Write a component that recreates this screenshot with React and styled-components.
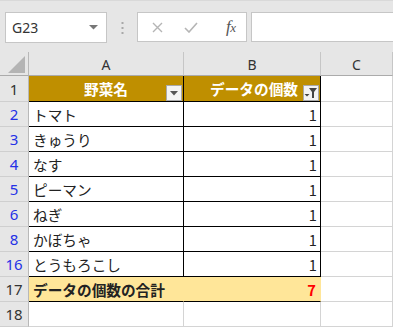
import React from "react";
import styled, { createGlobalStyle } from "styled-components";

const Global = createGlobalStyle`
  html, body { margin: 0; padding: 0; background: #e6e6e6; }
  body { font-family: "Noto Sans CJK JP", "Noto Sans", sans-serif; overflow: hidden; }
  * { box-sizing: border-box; }
`;

const Page = styled.div`
  width: 393px;
  height: 327px;
  display: flex;
  flex-direction: column;
  background: #e6e6e6;
  overflow: hidden;
`;

const FormulaBar = styled.div`
  height: 52px;
  display: flex;
  align-items: flex-start;
  padding: 11px 0 0 5px;
  border-top: 1px solid #d9d9d9;
`;

const NameBox = styled.div`
  width: 102px;
  height: 31px;
  background: #fff;
  border: 1px solid #c6c6c6;
  display: flex;
  align-items: center;
  justify-content: space-between;
  padding: 0 8px 0 6px;
  font-family: "Noto Sans", "Liberation Sans", sans-serif;
  font-size: 14px;
  color: #333;
`;

const Dots = styled.div`
  width: 30px;
  height: 31px;
  display: flex;
  align-items: center;
  justify-content: center;
`;

const ButtonsBox = styled.div`
  width: 110px;
  height: 30px;
  background: #fff;
  border: 1px solid #c6c6c6;
  display: flex;
  align-items: center;
  padding-left: 12px;
`;

const IconSlot = styled.div`
  width: ${(p) => p.$w}px;
  display: flex;
  align-items: center;
  justify-content: center;
`;

const Fx = styled.span`
  font-family: "Liberation Serif", "DejaVu Serif", serif;
  font-style: italic;
  color: #555;
  font-size: 17px;
  letter-spacing: -0.5px;
  small { font-size: 13px; }
`;

const FormulaInput = styled.div`
  flex: 1;
  height: 30px;
  margin-left: 4px;
  background: #fff;
  border: 1px solid #c6c6c6;
  border-right: none;
`;

const Sheet = styled.div`
  display: grid;
  grid-template-columns: 29px 155px 137px 1fr;
  grid-template-rows: 24px 26px repeat(9, 25px) 1fr;
  background: #fff;
  flex: 1;
`;

const Corner = styled.div`
  background: #e6e6e6;
  border-right: 1px solid #b8b8b8;
  border-bottom: 1px solid #ababab;
  display: flex;
  align-items: flex-end;
  justify-content: flex-end;
  padding: 0 3px 2px 0;
`;

const ColHead = styled.div`
  background: #e6e6e6;
  border-right: 1px solid #c6c6c6;
  border-bottom: 1px solid #ababab;
  display: flex;
  align-items: center;
  justify-content: center;
  font-family: "Noto Sans", "Liberation Sans", sans-serif;
  font-size: 14px;
  color: #333;
  padding-top: 1px;
`;

const RowNum = styled.div`
  background: #e6e6e6;
  border-right: 1px solid #b8b8b8;
  border-bottom: 1px solid #cfcfcf;
  display: flex;
  align-items: center;
  justify-content: center;
  font-family: "Noto Sans", "Liberation Sans", sans-serif;
  font-size: 15px;
  color: ${(p) => (p.$filtered ? "#2431e6" : "#333")};
`;

const borderColor = { black: "#000", grid: "#d4d4d4", total: "#ffe699", none: "transparent" };

const Cell = styled.div`
  position: relative;
  background: ${(p) => p.$bg || "#fff"};
  border-right: 1px solid ${(p) => borderColor[p.$right || "grid"]};
  border-bottom: 1px solid ${(p) => borderColor[p.$bottom || "grid"]};
  display: flex;
  align-items: center;
  justify-content: ${(p) => (p.$align === "right" ? "flex-end" : p.$align === "center" ? "center" : "flex-start")};
  padding: ${(p) => (p.$align === "right" ? `0 ${p.$pr ?? 3}px 0 4px` : "0 4px")};
  font-size: 14.67px;
  font-weight: ${(p) => (p.$bold ? 700 : 400)};
  color: ${(p) => p.$color || "#222"};
  white-space: nowrap;
`;

const FilterButton = styled.div`
  position: absolute;
  right: 1px;
  bottom: 0;
  width: 16px;
  height: 16px;
  background: #f3f3f3;
  border: 1px solid #a9a9a9;
  display: flex;
  align-items: center;
  justify-content: center;
`;

const Triangle = () => (
  <svg width="8" height="5" viewBox="0 0 8 5">
    <path d="M0 0 H8 L4 4.5 Z" fill="#555" />
  </svg>
);

const FilterIcon = () => (
  <svg width="14" height="12" viewBox="0 0 14 12">
    <path d="M0.5 7 H5.5 L3 9.5 Z" fill="#444" />
    <path d="M5 1 H13 L10 5 V11 H8 V5 Z" fill="#444" />
  </svg>
);

const rows = [
  { n: 2, name: "トマト" },
  { n: 3, name: "きゅうり" },
  { n: 4, name: "なす" },
  { n: 5, name: "ピーマン" },
  { n: 6, name: "ねぎ" },
  { n: 8, name: "かぼちゃ" },
  { n: 16, name: "とうもろこし" },
];

export default function App() {
  return (
    <Page>
      <Global />
      <FormulaBar>
        <NameBox>
          <span>G23</span>
          <svg width="9" height="5" viewBox="0 0 9 5">
            <path d="M0 0 H9 L4.5 4.5 Z" fill="#777" />
          </svg>
        </NameBox>
        <Dots>
          <svg width="3" height="12" viewBox="0 0 3 12">
            <rect x="0.5" y="0" width="2" height="2" fill="#a8a8a8" />
            <rect x="0.5" y="5" width="2" height="2" fill="#a8a8a8" />
            <rect x="0.5" y="10" width="2" height="2" fill="#a8a8a8" />
          </svg>
        </Dots>
        <ButtonsBox>
          <IconSlot $w={16}>
            <svg width="11" height="11" viewBox="0 0 11 11">
              <path d="M1 1 L10 10 M10 1 L1 10" stroke="#b5b5b5" strokeWidth="1.4" />
            </svg>
          </IconSlot>
          <IconSlot $w={50}>
            <svg width="14" height="11" viewBox="0 0 14 11">
              <path d="M1 6 L5 10 L13 1" stroke="#b5b5b5" strokeWidth="1.6" fill="none" />
            </svg>
          </IconSlot>
          <IconSlot $w={31}>
            <Fx>
              f<small>x</small>
            </Fx>
          </IconSlot>
        </ButtonsBox>
        <FormulaInput />
      </FormulaBar>
      <Sheet>
        <Corner>
          <svg width="17" height="17" viewBox="0 0 17 17">
            <path d="M17 0 V17 H0 Z" fill="#b4b4b4" />
          </svg>
        </Corner>
        <ColHead>A</ColHead>
        <ColHead>B</ColHead>
        <ColHead>C</ColHead>

        <RowNum>1</RowNum>
        <Cell $bg="#bf8f00" $align="center" $bold $color="#fff" $right="black" $bottom="black">
          野菜名
          <FilterButton>
            <Triangle />
          </FilterButton>
        </Cell>
        <Cell $bg="#bf8f00" $align="right" $pr={22} $bold $color="#fff" $right="black" $bottom="black">
          データの個数
          <FilterButton>
            <FilterIcon />
          </FilterButton>
        </Cell>
        <Cell />

        {rows.map((r) => (
          <React.Fragment key={r.n}>
            <RowNum $filtered>{r.n}</RowNum>
            <Cell $right="black" $bottom="black">{r.name}</Cell>
            <Cell $align="right" $right="black" $bottom="black">1</Cell>
            <Cell />
          </React.Fragment>
        ))}

        <RowNum>17</RowNum>
        <Cell $bg="#ffe699" $bold $right="total" $bottom="black">データの個数の合計</Cell>
        <Cell $bg="#ffe699" $align="right" $pr={4} $bold $color="#ff0000" $right="total" $bottom="black">7</Cell>
        <Cell />

        <RowNum>18</RowNum>
        <Cell />
        <Cell />
        <Cell />
      </Sheet>
    </Page>
  );
}
